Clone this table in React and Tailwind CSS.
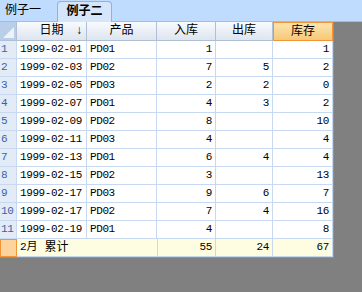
import React from 'react';

const rows = [
    ['1999-02-01', 'PD01', 1, '', 1],
    ['1999-02-03', 'PD02', 7, 5, 2],
    ['1999-02-05', 'PD03', 2, 2, 0],
    ['1999-02-07', 'PD01', 4, 3, 2],
    ['1999-02-09', 'PD02', 8, '', 10],
    ['1999-02-11', 'PD03', 4, '', 4],
    ['1999-02-13', 'PD01', 6, 4, 4],
    ['1999-02-15', 'PD02', 3, '', 13],
    ['1999-02-17', 'PD03', 9, 6, 7],
    ['1999-02-17', 'PD02', 7, 4, 16],
    ['1999-02-19', 'PD01', 4, '', 8],
];

const cols = 'grid grid-cols-[17px_70px_70px_59px_57px_60px]';
const cell = 'h-[18px] border-r border-b border-[#c6d9f1] flex items-center px-[3px] whitespace-nowrap text-[11px] tracking-[-0.4px]';
const head = 'h-[19px] border-r border-b border-[#aebfd6] bg-gradient-to-b from-[#f8fafd] to-[#dde5ef] flex items-center justify-center';

const HeadCell = ({ children, active }) => (
    <div
        className={
            active
                ? 'h-[19px] border border-[#f29536] bg-gradient-to-b from-[#fce4ad] to-[#f6c877] flex items-center justify-center'
                : head
        }
    >
        {children}
    </div>
);

export default function App() {
    return (
        <div
            className="w-[362px] h-[292px] bg-[#808080] text-[12px] text-black overflow-hidden"
            style={{ fontFamily: '"Liberation Mono", "Noto Sans CJK SC", monospace' }}
        >
            {/* tabs */}
            <div className="h-[22px] bg-[#bfdbfe] flex items-end border-b border-[#9ebde6]">
                <div className="w-[57px] h-[20px] flex items-center pl-[5px]">例子一</div>
                <div className="w-[55px] h-[21px] -mb-px rounded-t-[4px] border border-b-0 border-[#8fb2de] bg-[#d6e6fa] flex items-center justify-center font-bold">
                    例子二
                </div>
            </div>

            {/* grid */}
            <div className="w-[334px] border-r border-b border-[#6e98cf] bg-white">
                <div className={cols}>
                    <div className="h-[19px] border-r border-b border-[#aebfd6] bg-[#b9cee9] relative">
                        <svg className="absolute right-[2px] bottom-[2px]" width="11" height="11">
                            <polygon points="11,0 11,11 0,11" fill="#eef3fa" />
                        </svg>
                    </div>
                    <HeadCell>
                        <div className="relative w-full flex justify-center">
                            <span>日期</span>
                            <span className="absolute right-[3px]">↓</span>
                        </div>
                    </HeadCell>
                    <HeadCell>产品</HeadCell>
                    <HeadCell>入库</HeadCell>
                    <HeadCell>出库</HeadCell>
                    <HeadCell active>库存</HeadCell>
                </div>

                {rows.map((r, i) => (
                    <div key={i} className={cols}>
                        <div className={`${cell} bg-[#e3ebf6] text-[#3465a8] pl-[1px]`}>{i + 1}</div>
                        <div className={cell}>{r[0]}</div>
                        <div className={cell}>{r[1]}</div>
                        <div className={`${cell} justify-end`}>{r[2]}</div>
                        <div className={`${cell} justify-end`}>{r[3]}</div>
                        <div className={`${cell} justify-end`}>{r[4]}</div>
                    </div>
                ))}

                <div className={`${cols} bg-[#fffde1]`}>
                    <div className="h-[18px] border border-[#f29536] bg-[#fdd49c]" />
                    <div className="h-[18px] border-b border-[#c6d9f1] col-span-2 flex items-center px-[3px] whitespace-nowrap">
                        <span className="text-[11px]">2月</span>
                        <span className="ml-[7px]">累计</span>
                    </div>
                    <div className={`${cell} justify-end border-l`}>55</div>
                    <div className={`${cell} justify-end`}>24</div>
                    <div className={`${cell} justify-end`}>67</div>
                </div>
            </div>
        </div>
    );
}
